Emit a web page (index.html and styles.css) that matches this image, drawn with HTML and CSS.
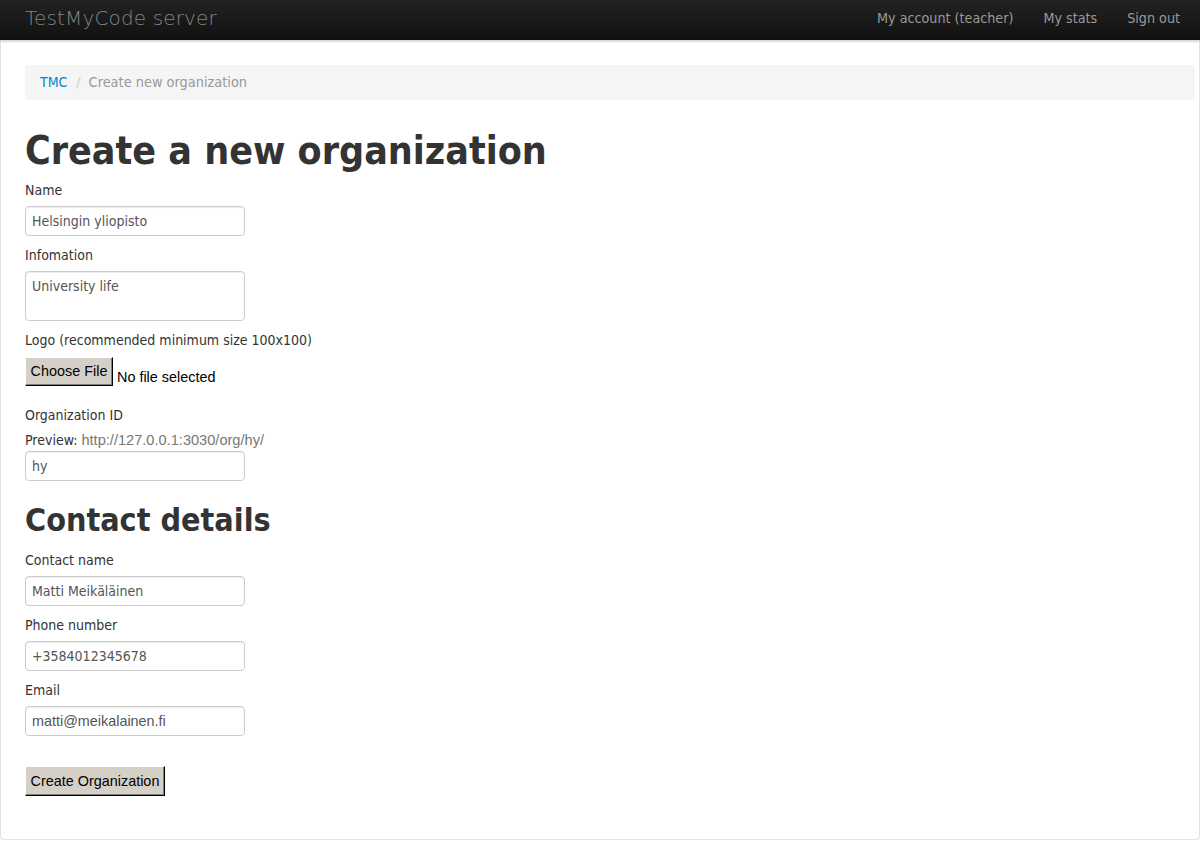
FILE: index.html
```html
<!DOCTYPE html>
<html>
<head>
<meta charset="utf-8">
<title>TestMyCode server</title>
<link rel="stylesheet" href="styles.css">
</head>
<body>
<div class="navbar">
  <a class="brand" href="#">TestMyCode server</a>
  <ul class="nav">
    <li><a href="#">My account (teacher)</a></li>
    <li><a href="#">My stats</a></li>
    <li><a href="#">Sign out</a></li>
  </ul>
</div>
<div class="container">
  <ul class="breadcrumb">
    <li><a href="#">TMC</a><span class="divider">/</span></li>
    <li class="active">Create new organization</li>
  </ul>
  <h1>Create a new organization</h1>
  <form class="form">
    <label>Name</label>
    <div class="input">Helsingin yliopisto</div>
    <label>Infomation</label>
    <div class="input textarea">University life</div>
    <label>Logo (recommended minimum size 100x100)</label>
    <div class="file">
      <span class="btn file-btn">Choose File</span>
      <span class="file-name">No file selected</span>
    </div>
    <label class="org-label">Organization ID</label>
    <div class="preview">Preview: <span class="url">http://127.0.0.1:3030/org/hy/</span></div>
    <div class="input">hy</div>
    <h2>Contact details</h2>
    <label>Contact name</label>
    <div class="input">Matti Meikäläinen</div>
    <label>Phone number</label>
    <div class="input">+3584012345678</div>
    <label>Email</label>
    <div class="input email">matti@meikalainen.fi</div>
    <div class="actions"><span class="btn submit">Create Organization</span></div>
  </form>
</div>
</body>
</html>
```
FILE: styles.css
```css
html, body {
  margin: 0;
  padding: 0;
  background: #fff;
}
body {
  font-family: "DejaVu Sans Condensed", "DejaVu Sans", sans-serif;
  font-stretch: semi-condensed;
  font-size: 14px;
  line-height: 20px;
  color: #333;
}
a { text-decoration: none; }

.navbar {
  height: 40px;
  background: linear-gradient(to bottom, #222222, #111111);
  display: flex;
  align-items: flex-start;
  justify-content: space-between;
  box-shadow: 0 1px 3px rgba(0,0,0,0.25);
  position: relative;
  z-index: 2;
}
.brand {
  font-family: "DejaVu Sans ExtraLight", "DejaVu Sans", sans-serif;
  font-stretch: normal;
  font-size: 20px;
  font-weight: 200;
  color: #858585;
  padding: 8px 0 0 25px;
  line-height: 20px;
  letter-spacing: 0.15px;
}
.nav {
  list-style: none;
  margin: 0;
  padding: 0 5px 0 0;
  display: flex;
}
.nav a {
  display: block;
  padding: 10px 15px;
  color: #999;
  font-size: 14.2px;
  line-height: 16px;
}

.container {
  border: 1px solid #e3e3e3;
  border-top: none;
  border-radius: 0 0 4px 4px;
  padding: 25px 4px 43px 24px;
}

.breadcrumb {
  list-style: none;
  margin: 0 0 20px;
  padding: 8px 15px;
  background: #f5f5f5;
  border-radius: 4px;
  display: flex;
  height: 19px;
  line-height: 19px;
}
.breadcrumb a { color: #0088cc; }
.breadcrumb .divider { color: #ccc; padding: 0 8px 0 9px; }
.breadcrumb .active { color: #999; font-size: 14.4px; }

h1 {
  font-size: 39px;
  line-height: 40px;
  margin: 31px 0 9px;
  font-weight: bold;
  color: #333;
}
h2 {
  font-size: 32px;
  line-height: 40px;
  margin: 19px 0 10px;
  font-weight: bold;
  color: #333;
}

.form label {
  display: block;
  margin-bottom: 6px;
}
.input {
  box-sizing: border-box;
  width: 220px;
  height: 30px;
  padding: 4px 6px;
  border: 1px solid #ccc;
  border-radius: 4px;
  color: #555;
  line-height: 20px;
  margin-bottom: 9px;
  box-shadow: inset 0 1px 1px rgba(0,0,0,0.075);
}
.input.textarea { height: 50px; }
.input.email { font-family: "Liberation Sans", Arial, sans-serif; font-stretch: normal; font-size: 14.4px; }

.btn {
  display: inline-block;
  box-sizing: border-box;
  background: #d4d0c8;
  color: #000;
  font-family: "Liberation Sans", Arial, sans-serif;
  font-stretch: normal;
  font-size: 14.4px;
  border-top: 1px solid #fff;
  border-left: 1px solid #fff;
  border-right: 1px solid #000;
  border-bottom: 1px solid #000;
  box-shadow: inset -1px -1px 0 #808080;
}
.file {
  display: flex;
  align-items: flex-end;
  height: 30px;
  margin-bottom: 19px;
}
.file-btn {
  height: 29px;
  line-height: 27px;
  width: 88px;
  text-align: center;
}
.file-name {
  font-family: "Liberation Sans", Arial, sans-serif;
  font-stretch: normal;
  font-size: 14.4px;
  color: #000;
  padding-left: 4px;
  line-height: 20px;
  margin-bottom: -1px;
}
.form .org-label { margin-bottom: 5px; }
.preview { margin-bottom: 1px; }
.preview .url {
  color: #777;
  font-family: "Liberation Sans", Arial, sans-serif;
  font-stretch: normal;
  font-size: 14.6px;
}
.actions {
  margin-top: 30px;
}
.submit {
  width: 140px;
  height: 30px;
  line-height: 28px;
  text-align: center;
}
```
